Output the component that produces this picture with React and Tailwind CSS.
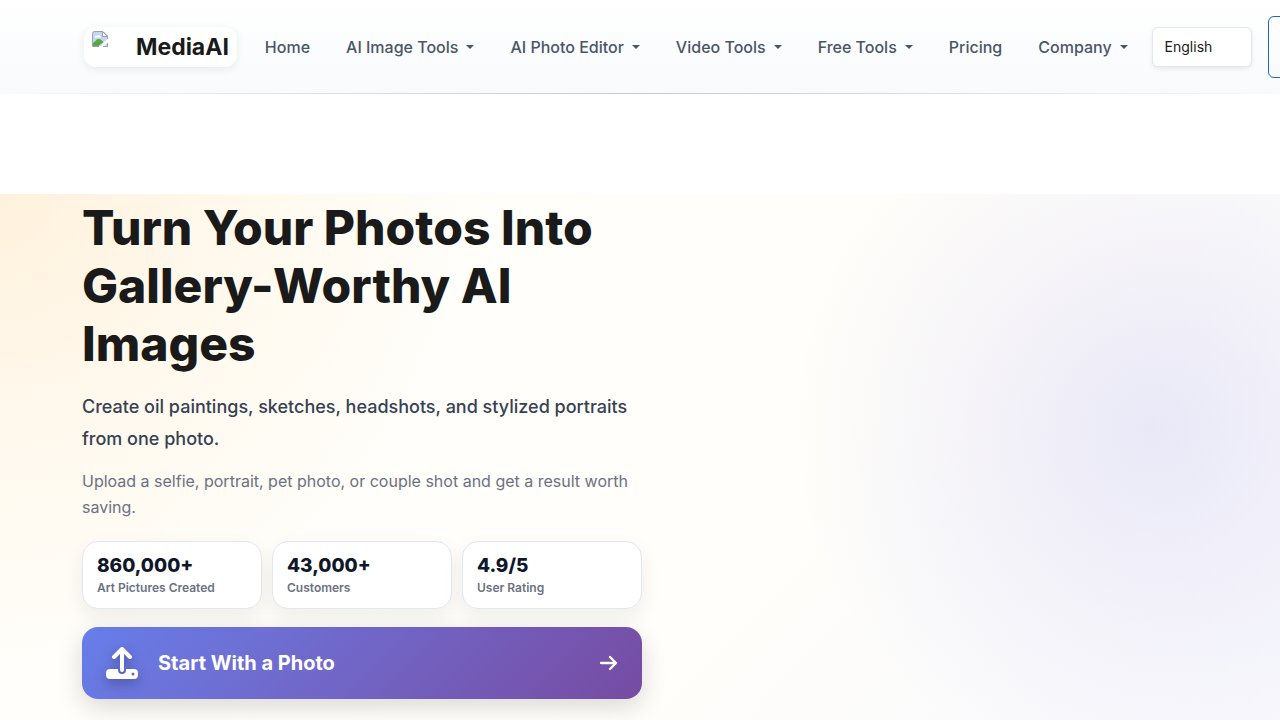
import React, { useState } from "react";

const navItems = [
  { label: "Home" },
  { label: "AI Image Tools", menu: true },
  { label: "AI Photo Editor", menu: true },
  { label: "Video Tools", menu: true },
  { label: "Free Tools", menu: true },
  { label: "Pricing" },
  { label: "Company", menu: true },
];

const stats = [
  { value: "860,000+", label: "Art Pictures Created" },
  { value: "43,000+", label: "Customers" },
  { value: "4.9/5", label: "User Rating" },
];

function MissingImageIcon() {
  return (
    <svg className="w-4 h-4" viewBox="0 0 16 16" aria-hidden="true">
      <path d="M2 0.5h9l4.500 4.500v10.500h-15V2z" fill="#c5d5f4" />
      <path d="M2.500 6.500a2 2 0 0 1 2.500-1.800 2.500 2.500 0 0 1 4 1.800z" fill="#fff" />
      <path d="M1 15v-3l4.500-4 3 .2 3 2.800-5 4z" fill="#57a944" />
      <path d="M15.500 8V5L11 .5H2.500a2 2 0 0 0-2 2v13H7" fill="none" stroke="#9aa0a8" />
      <path d="M10.500 0.5v5h5z" fill="#f4f6f9" stroke="#9aa0a8" />
      <path d="M16 7.500 7 16h4l5-4.500z" fill="#fff" />
      <path d="M15.500 12v3.500H11" fill="none" stroke="#9aa0a8" />
    </svg>
  );
}

function UploadIcon() {
  return (
    <svg className="w-8 h-8 drop-shadow-[0_4px_6px_rgba(0,0,0,0.3)]" viewBox="0 0 32 32" fill="none" aria-hidden="true">
      <path
        fill="#fff"
        fillRule="evenodd"
        d="M4 22h8v1a4 4 0 0 0 8 0v-1h8a4 4 0 0 1 4 4v2a4 4 0 0 1-4 4H4a4 4 0 0 1-4-4v-2a4 4 0 0 1 4-4zM27 28.500a1.500 1.500 0 1 0 0-3 1.500 1.500 0 0 0 0 3z"
      />
      <path d="M16 23V3M8 10l8-8 8 8" stroke="#fff" strokeWidth="4" strokeLinecap="round" strokeLinejoin="round" />
    </svg>
  );
}

function Header() {
  const [lang, setLang] = useState("en");

  return (
    <header className="bg-linear-to-b from-white to-[#f8fafc]">
      <div className="pl-[84px] h-[93px] flex items-center">
        <a href="#" className="shrink-0 h-10 px-2 flex items-center bg-white rounded-xl shadow-[0_2px_8px_rgba(0,0,0,0.08)]">
          <span className="w-9 h-8 mr-2">
            <MissingImageIcon />
          </span>
          <span className="pt-0.5 text-[23px] font-bold text-[#1a1a1a]">MediaAI</span>
        </a>

        <nav className="shrink-0 ml-2.5 flex">
          {navItems.map((item) => (
            <a key={item.label} href="#" className="px-[18px] flex items-center whitespace-nowrap font-medium text-[#4a5568]">
              {item.label}
              {item.menu && (
                <span className="ml-2 border-x-4 border-t-4 border-x-transparent border-t-[#4a5568]" />
              )}
            </a>
          ))}
        </nav>

        <select
          aria-label="Language"
          value={lang}
          onChange={(e) => setLang(e.target.value)}
          className="appearance-none shrink-0 ml-1.5 w-[100px] h-10 pl-3 text-sm text-[#1a1a1a] bg-white border border-gray-200 rounded-md shadow-[0_2px_4px_rgba(0,0,0,0.08)]"
        >
          <option value="en">English</option>
          <option value="de">Deutsch</option>
          <option value="es">Español</option>
        </select>

        <button
          type="button"
          aria-label="Account"
          className="shrink-0 ml-4 w-24 h-[62px] border border-[#1a66cc] rounded-md"
        />
      </div>
      <div className="h-px bg-linear-to-r from-transparent via-[#c3c9d2] to-transparent" />
    </header>
  );
}

function Stat({ value, label }) {
  return (
    <div className="px-3.5 pt-3 h-[68px] bg-white border border-slate-200 rounded-2xl shadow-[0_8px_20px_rgba(15,23,42,0.07)]">
      <div className="text-[19px] leading-6 font-extrabold text-slate-900">{value}</div>
      <div className="text-xs leading-5 font-semibold text-gray-500">{label}</div>
    </div>
  );
}

function Hero() {
  return (
    <section className="mt-[100px] grow pt-[5px] pb-5 px-[82px] bg-[radial-gradient(circle_at_90%_44%,rgba(99,102,221,0.13),rgba(110,100,220,0.07)_160px,transparent_360px),radial-gradient(circle_at_0%_0%,rgba(255,183,77,0.16),rgba(255,183,77,0.07)_220px,transparent_460px),linear-gradient(135deg,#fffdf8_0%,#fffefa_60%,#f9f9fd_100%)]">
      <div className="max-w-[560px]">
        <h1 className="text-5xl leading-[58px] font-extrabold text-[#1a1a1a]">
          Turn Your Photos Into Gallery-Worthy AI
          <br />
          Images
        </h1>
        <p className="mt-[18px] text-lg leading-8 font-medium text-gray-700">
          Create oil paintings, sketches, headshots, and stylized portraits from one photo.
        </p>
        <p className="mt-[13px] text-base leading-[26px] text-gray-500">
          Upload a selfie, portrait, pet photo, or couple shot and get a result worth saving.
        </p>

        <div className="mt-[21px] grid grid-cols-3 gap-2.5">
          {stats.map((s) => (
            <Stat key={s.label} value={s.value} label={s.label} />
          ))}
        </div>

        <button
          type="button"
          className="mt-[18px] w-full h-[72px] px-6 flex items-center text-white rounded-2xl bg-linear-135 from-[#667eea] to-[#764ba2] shadow-[0_8px_24px_rgba(0,0,0,0.15)]"
        >
          <UploadIcon />
          <span className="ml-5 text-xl font-bold">Start With a Photo</span>
          <svg className="ml-auto w-5 h-5" viewBox="0 0 20 20" fill="none" aria-hidden="true">
            <path d="M3 10h15M12 4l6 6-6 6" stroke="#fff" strokeWidth="2.300" strokeLinecap="round" strokeLinejoin="round" />
          </svg>
        </button>
      </div>
    </section>
  );
}

export default function App() {
  return (
    <div className="min-h-screen flex flex-col overflow-x-clip bg-white font-['Inter',sans-serif]">
      <Header />
      <Hero />
    </div>
  );
}
